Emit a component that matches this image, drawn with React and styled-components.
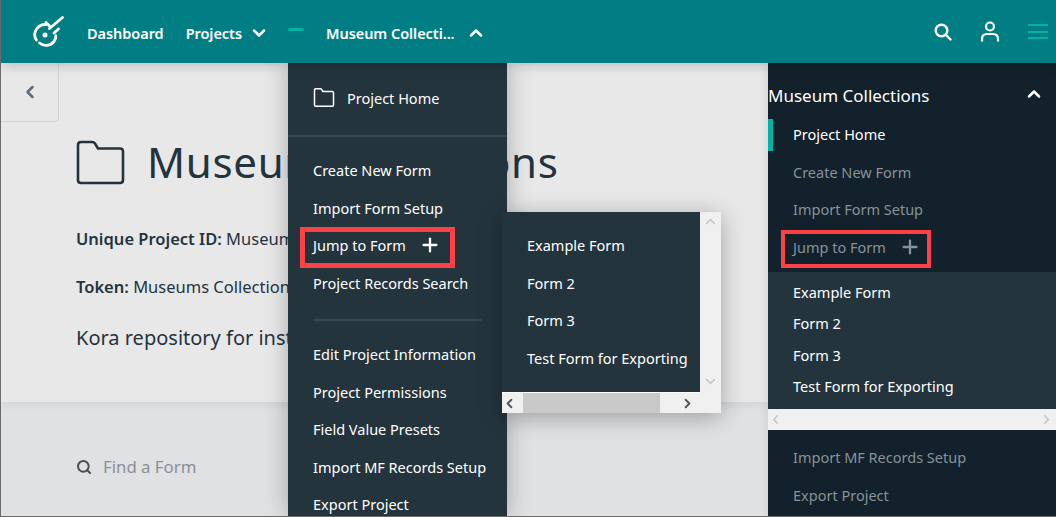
import styled, { createGlobalStyle } from "styled-components";
import { ChevronLeft, ChevronRight, ChevronUp, ChevronDown, Search, Plus } from "lucide-react";

const Global = createGlobalStyle`
  html, body { margin: 0; padding: 0; background: #e8e8e9; }
  * { box-sizing: border-box; }
`;

const Page = styled.div`
  width: 1056px;
  height: 517px;
  overflow: hidden;
  display: flex;
  flex-direction: column;
  font-family: "Noto Sans", sans-serif;
  border-left: 1px solid #6b6b6b;
  border-bottom: 1px solid #6b6b6b;
`;

const Header = styled.header`
  height: 63px;
  flex: none;
  background: #017e84;
  display: flex;
  align-items: center;
  padding-left: 31px;
  color: #fff;
  position: relative;
  z-index: 5;
  box-shadow: 0 2px 12px rgba(0, 0, 0, 0.2);
`;

const NavText = styled.span`
  font-size: 14.5px;
  font-weight: 600;
  letter-spacing: -0.05px;
  white-space: nowrap;
  margin: 2px 0 0 ${(p) => p.$left}px;
`;

const NavChevron = styled.span`
  display: flex;
  margin: 2px 0 0 ${(p) => p.$left}px;
`;

const Dash = styled.span`
  width: 16px;
  height: 3px;
  border-radius: 2px;
  background: #00b3a7;
  margin: -4px 0 0 ${(p) => p.$left}px;
`;

const HeaderRight = styled.div`
  margin-left: auto;
  display: flex;
  align-items: center;
  gap: 28px;
  padding-right: 8px;
`;

const Burger = styled.div`
  display: flex;
  flex-direction: column;
  gap: 4.5px;
  width: 20px;
  span {
    height: 2px;
    background: #00b3a7;
  }
`;

const Body = styled.div`
  flex: 1;
  min-height: 0;
  display: flex;
  position: relative;
`;

const Main = styled.main`
  flex: 1;
  min-width: 0;
  display: flex;
  flex-direction: column;
  background: #e0e1e3;
`;

const Hero = styled.section`
  height: 339px;
  flex: none;
  background: #e8e8e9;
  padding: 0 0 0 75px;
  color: #24343d;
  position: relative;
  box-shadow: 0 2px 10px rgba(0, 0, 0, 0.08);
`;

const BackTab = styled.div`
  position: absolute;
  left: 0;
  top: 0;
  width: 58px;
  height: 59px;
  border: 1px solid #d4d4d6;
  border-top: 0;
  border-left: 0;
  border-bottom-right-radius: 5px;
  display: flex;
  align-items: center;
  justify-content: center;
  color: #5c6b78;
`;

const TitleRow = styled.div`
  display: flex;
  align-items: center;
  gap: 22px;
  padding-top: 72px;
  height: 126px;
`;

const Title = styled.h1`
  margin: 0;
  font-size: 42px;
  letter-spacing: 0.7px;
  font-weight: 400;
  line-height: 54px;
  white-space: nowrap;
`;

const Meta = styled.p`
  margin: ${(p) => p.$top}px 0 0;
  font-size: 16.5px;
  line-height: 22px;
  white-space: nowrap;
  b {
    font-weight: 600;
  }
`;

const Description = styled.p`
  margin: 27px 0 0;
  font-size: 20px;
  line-height: 26px;
  white-space: nowrap;
`;

const FindBar = styled.div`
  display: flex;
  align-items: center;
  gap: 11px;
  padding: 53px 0 0 75px;
  color: #4a4f55;
`;

const FindText = styled.span`
  font-size: 16.8px;
  color: #8b9096;
`;

const Sidebar = styled.aside`
  width: 288px;
  flex: none;
  background: #12212b;
  position: relative;
  z-index: 2;
  box-shadow: -2px 0 8px rgba(0, 0, 0, 0.08);
`;

const SideHead = styled.div`
  height: 52.5px;
  display: flex;
  align-items: flex-end;
  justify-content: space-between;
  padding: 0 12px 9px 0;
  color: #fff;
  font-size: 17px;
  svg {
    margin-bottom: 3px;
  }
`;

const SideItem = styled.div`
  height: 37.5px;
  display: flex;
  align-items: center;
  padding-left: 25px;
  font-size: 14.5px;
  white-space: nowrap;
  color: ${(p) => (p.$active ? "#fff" : "#87929a")};
  position: relative;
  &::before {
    content: "";
    display: ${(p) => (p.$active ? "block" : "none")};
    position: absolute;
    left: 0;
    top: 3.5px;
    width: 5px;
    height: 32px;
    background: #00b3a7;
  }
`;

const SideSub = styled.div`
  background: #24343d;
  height: 137px;
  padding-top: 4.5px;
  margin-top: 6.5px;
`;

const SubItem = styled.div`
  height: 31.3px;
  display: flex;
  align-items: center;
  padding-left: 25px;
  font-size: 14.5px;
  white-space: nowrap;
  color: #fff;
`;

const HScroll = styled.div`
  height: 21px;
  background: #f0f0f0;
  display: flex;
  align-items: center;
  justify-content: space-between;
  color: ${(p) => (p.$muted ? "#c4c4c4" : "#555")};
  padding: 0 2px 0 0;
`;

const AfterScroll = styled.div`
  padding-top: 8.5px;
`;

// red annotation box round a menu entry, its text sits above the box centre
const Marked = styled.span`
  display: inline-flex;
  align-items: center;
  border: ${(p) => p.$border}px solid #ff4044;
  margin: ${(p) => p.$down}px 0 0 -${(p) => p.$pad + p.$border}px;
  padding: 0 ${(p) => p.$end}px ${(p) => p.$lift}px ${(p) => p.$pad}px;
  height: ${(p) => p.$height}px;
  gap: ${(p) => p.$gap}px;
`;

const Dropdown = styled.nav`
  position: absolute;
  left: 287px;
  top: 0;
  bottom: 0;
  width: 219px;
  background: #24343d;
  color: #fff;
  z-index: 3;
  box-shadow: 0 0 22px rgba(0, 0, 0, 0.28);
`;

const DropHome = styled.div`
  height: 74px;
  display: flex;
  align-items: center;
  gap: 12px;
  padding: 0 0 3px 25px;
  font-size: 14.5px;
  border-bottom: 2px solid #354650;
`;

const DropList = styled.div`
  padding: 14.5px 0 0 25px;
`;

const DropItem = styled.div`
  height: 37.5px;
  display: flex;
  align-items: center;
  font-size: 14.5px;
  white-space: nowrap;
`;

const DropRule = styled.div`
  height: 2px;
  width: 169px;
  background: #354650;
  margin: 17px 0 15px;
`;

const Fly = styled.div`
  position: absolute;
  left: 214px;
  top: 149px;
  width: 219px;
  height: 201px;
  display: grid;
  grid-template-columns: 198px 21px;
  grid-template-rows: 180px 21px;
  box-shadow: 0 4px 22px rgba(0, 0, 0, 0.3);
`;

const FlyList = styled.div`
  background: #24343d;
  padding: 14.5px 0 0 25px;
  overflow: hidden;
`;

const VBar = styled.div`
  grid-row: 1 / 3;
  grid-column: 2;
  background: #f0f0f0;
  display: flex;
  flex-direction: column;
  align-items: center;
  justify-content: space-between;
  padding: 2px 0 24px;
  color: #c8c8c8;
`;

const HBar = styled(HScroll)`
  padding: 0 5px 0 0;
  border-top: 1px solid #fff;
  position: relative;
`;

const Thumb = styled.div`
  position: absolute;
  left: 21px;
  width: 137px;
  top: 0;
  bottom: 0;
  background: #c9c9c9;
`;

const FolderIcon = ({ size, height, stroke }) => (
  <svg width={size} height={height} viewBox="0 0 49 45" fill="none" stroke="currentColor" strokeWidth={stroke} strokeLinejoin="round">
    <path d="M5 2h11c1.500 0 2.400.6 3.200 1.800L22 8.500h22c1.700 0 3 1.300 3 3V40c0 1.700-1.300 3-3 3H5c-1.700 0-3-1.300-3-3V5c0-1.700 1.300-3 3-3z" />
  </svg>
);

const Logo = () => (
  <svg width="32" height="32" viewBox="0 0 32 32" fill="none" stroke="#fff" strokeWidth="2.800" strokeLinecap="round">
    <path d="M14 8.500a11 11 0 0 0-10.600 6.800c-1.300 3.200-.6 6.400 1 8.700" />
    <path d="M7.500 27c4.500 3.800 11 2.800 14.500-1.500 1.600-2 2-4 1.800-5.800" />
    <circle cx="13" cy="19" r="2.500" fill="#fff" stroke="none" />
    <path d="M17.500 12.500 30.500 1.500" />
    <path d="M14 6.500 17.500 10" />
    <path d="M22 17l4.500-4" />
  </svg>
);

const SearchIcon = () => (
  <svg width="18" height="18" viewBox="0 0 18 18" fill="none" stroke="#fff" strokeWidth="2.400" strokeLinecap="round">
    <circle cx="7.500" cy="7.500" r="5.800" />
    <path d="M12 12l4.500 4.500" />
  </svg>
);

const UserIcon = () => (
  <svg width="20" height="21" viewBox="0 0 20 21" fill="none" stroke="#fff" strokeWidth="2.200">
    <circle cx="10" cy="5.500" r="4" />
    <path d="M2 20.500v-2.500c0-3 2-5 5-5h6c3 0 5 2 5 5v2.500" />
  </svg>
);

const formNames = ["Example Form", "Form 2", "Form 3", "Test Form for Exporting"];
const dropTop = ["Create New Form", "Import Form Setup"];
const dropBottom = ["Edit Project Information", "Project Permissions", "Field Value Presets", "Import MF Records Setup", "Export Project"];

const App = () => {
  return (
    <Page>
      <Global />
      <Header>
        <Logo />
        <NavText $left={23}>Dashboard</NavText>
        <NavText $left={22}>Projects</NavText>
        <NavChevron $left={7}><ChevronDown size={20} strokeWidth={3} /></NavChevron>
        <Dash $left={19} />
        <NavText $left={22}>Museum Collecti...</NavText>
        <NavChevron $left={11}><ChevronUp size={20} strokeWidth={3} /></NavChevron>
        <HeaderRight>
          <SearchIcon />
          <UserIcon />
          <Burger><span /><span /><span /></Burger>
        </HeaderRight>
      </Header>
      <Body>
        <Main>
          <Hero>
            <BackTab><ChevronLeft size={20} strokeWidth={3} /></BackTab>
            <TitleRow>
              <FolderIcon size={49} height={45} stroke={2.6} />
              <Title>Museum Collections</Title>
            </TitleRow>
            <Meta $top={39}><b>Unique Project ID:</b> Museum_Collections</Meta>
            <Meta $top={26}><b>Token:</b> Museums Collections</Meta>
            <Description>Kora repository for institutions</Description>
          </Hero>
          <FindBar>
            <Search size={16} strokeWidth={3} />
            <FindText>Find a Form</FindText>
          </FindBar>
        </Main>
        <Dropdown>
          <DropHome>
            <FolderIcon size={22} height={19} stroke={3.6} />
            Project Home
          </DropHome>
          <DropList>
            {dropTop.map((item) => <DropItem key={item}>{item}</DropItem>)}
            <DropItem>
              <Marked $border={5} $pad={8} $end={9} $height={41} $gap={13} $down={5} $lift={5}>
                Jump to Form <Plus size={22} strokeWidth={2.5} />
              </Marked>
            </DropItem>
            <DropItem>Project Records Search</DropItem>
            <DropRule />
            {dropBottom.map((item) => <DropItem key={item}>{item}</DropItem>)}
          </DropList>
          <Fly>
            <FlyList>
              {formNames.map((item) => <DropItem key={item}>{item}</DropItem>)}
            </FlyList>
            <VBar><ChevronUp size={15} strokeWidth={2.5} /><ChevronDown size={15} strokeWidth={2.5} /></VBar>
            <HBar>
              <Thumb />
              <ChevronLeft size={15} strokeWidth={3} />
              <ChevronRight size={15} strokeWidth={3} />
            </HBar>
          </Fly>
        </Dropdown>
        <Sidebar>
          <SideHead>Museum Collections<ChevronUp size={20} strokeWidth={3} /></SideHead>
          <SideItem $active>Project Home</SideItem>
          <SideItem>Create New Form</SideItem>
          <SideItem>Import Form Setup</SideItem>
          <SideItem>
            <Marked $border={4} $pad={8} $end={6} $height={38} $gap={13} $down={4} $lift={3}>
              Jump to Form <Plus size={22} strokeWidth={2.5} />
            </Marked>
          </SideItem>
          <SideSub>
            {formNames.map((item) => <SubItem key={item}>{item}</SubItem>)}
          </SideSub>
          <HScroll $muted><ChevronLeft size={15} strokeWidth={2.5} /><ChevronRight size={15} strokeWidth={2.5} /></HScroll>
          <AfterScroll>
            <SideItem>Import MF Records Setup</SideItem>
            <SideItem>Export Project</SideItem>
          </AfterScroll>
        </Sidebar>
      </Body>
    </Page>
  );
};

export default App;
